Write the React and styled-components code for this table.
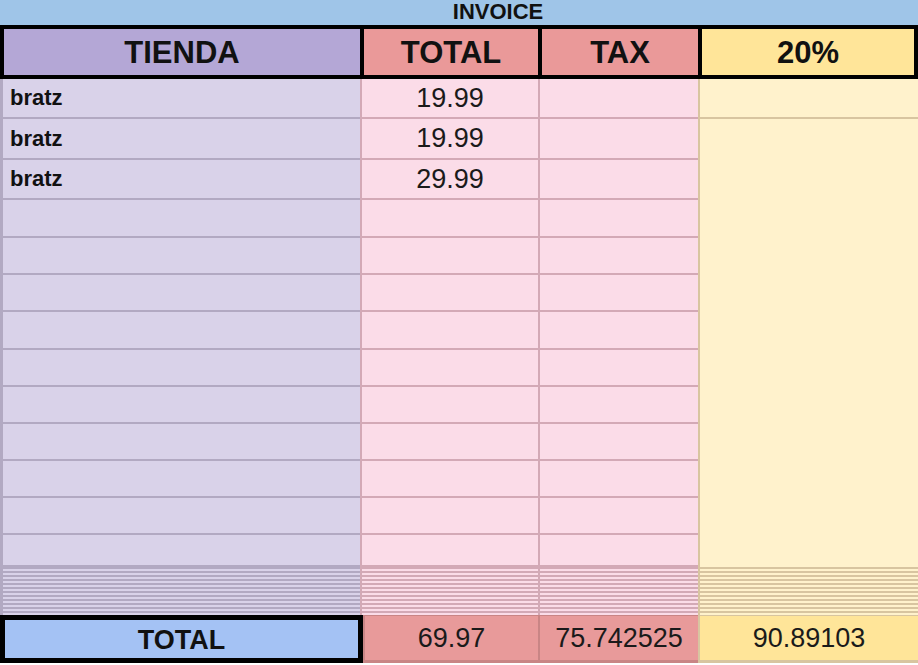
import styled, { createGlobalStyle } from "styled-components";

const GlobalStyle = createGlobalStyle`
  html, body {
    margin: 0;
    padding: 0;
    background: #fff;
  }
  body {
    font-family: "Liberation Sans", Arial, sans-serif;
    color: #111;
  }
`;

const palette = {
  store: { head: "#b4a7d6", cell: "#d9d2e9", line: "#b2a9c2" },
  total: { head: "#ea9999", cell: "#fbdce8", line: "#d3a9b6" },
  tax: { head: "#ea9999", cell: "#fbdce8", line: "#d3a9b6" },
  pct: { head: "#ffe599", cell: "#fff2cc", line: "#d8c5a0" },
};

const COLS = "360px 178px 160px 1fr";

const Sheet = styled.div`
  width: 918px;
  height: 665px;
  overflow: hidden;
  background: #fff;
`;

const TitleBar = styled.div`
  height: 25px;
  box-sizing: border-box;
  background: #9fc5e8;
  display: flex;
  align-items: flex-start;
  justify-content: center;
  padding: 1px 0 0 78px;
  font-size: 22px;
  font-weight: 700;
  line-height: 1;
`;

const HeaderRow = styled.div`
  display: grid;
  grid-template-columns: ${COLS};
  height: 54px;
  box-sizing: border-box;
  border-top: 4px solid #000;
  border-bottom: 4px solid #000;
`;

const HeadCell = styled.div`
  background: ${(p) => p.$bg};
  border-left: 4px solid #000;
  border-right: ${(p) => (p.$last ? "4px solid #000" : "none")};
  display: flex;
  align-items: center;
  justify-content: center;
  font-size: 31px;
  font-weight: 700;
  padding-top: 2px;
  box-sizing: border-box;
`;

const Body = styled.div`
  display: grid;
  grid-template-columns: ${COLS};
  grid-template-rows: 40px 41px 40px 38px 37px 37px 38px 37px 37px 37px 37px 37px 32px 48px;
`;

const Cell = styled.div`
  background: ${(p) => p.$tone.cell};
  border-left: ${(p) => (p.$first ? "3px" : "2px")} solid ${(p) => p.$tone.line};
  border-bottom: 2px solid ${(p) => p.$tone.line};
  box-sizing: border-box;
  display: flex;
  align-items: center;
  justify-content: ${(p) => (p.$center ? "center" : "flex-start")};
  padding-left: ${(p) => (p.$center ? "0" : "7px")};
  font-size: ${(p) => (p.$center ? "27px" : "22px")};
  font-weight: ${(p) => (p.$center ? 400 : 700)};
  color: ${(p) => (p.$center ? "#1a1a1a" : "#111")};
`;

const MergedCell = styled.div`
  grid-column: 4;
  grid-row: 2 / span 12;
  background: ${palette.pct.cell};
  border-left: 2px solid ${palette.pct.line};
`;

const Squashed = styled.div`
  border-left: ${(p) => (p.$first ? "3px" : "2px")} solid ${(p) => p.$tone.line};
  background: repeating-linear-gradient(
    to bottom,
    ${(p) => p.$tone.line} 0 2px,
    ${(p) => p.$tone.cell} 2px 4px
  );
`;

const FooterRow = styled.div`
  display: grid;
  grid-template-columns: 363px 175px 160px 1fr;
  height: 48px;
`;

const FootLabel = styled.div`
  background: #a4c2f4;
  border: 5px solid #000;
  box-sizing: border-box;
  display: flex;
  align-items: center;
  justify-content: center;
  font-size: 27px;
  font-weight: 700;
  padding-top: 2px;
`;

const FootCell = styled.div`
  background: ${(p) => p.$bg};
  border-left: 2px solid ${(p) => p.$line};
  border-top: 1px solid ${(p) => p.$line};
  border-bottom: 3px solid ${(p) => p.$line};
  box-sizing: border-box;
  display: flex;
  align-items: center;
  justify-content: center;
  font-size: 27px;
  color: #1a1a1a;
`;

const items = [
  { store: "bratz", total: "19.99" },
  { store: "bratz", total: "19.99" },
  { store: "bratz", total: "29.99" },
];

const EMPTY_ROWS = 10;

export default function App() {
  const rows = [
    ...items,
    ...Array.from({ length: EMPTY_ROWS }, () => ({ store: "", total: "" })),
  ];

  return (
    <Sheet>
      <GlobalStyle />
      <TitleBar>INVOICE</TitleBar>
      <HeaderRow>
        <HeadCell $bg={palette.store.head}>TIENDA</HeadCell>
        <HeadCell $bg={palette.total.head}>TOTAL</HeadCell>
        <HeadCell $bg={palette.tax.head}>TAX</HeadCell>
        <HeadCell $bg={palette.pct.head} $last>
          20%
        </HeadCell>
      </HeaderRow>
      <Body>
        {rows.map((row, i) => [
          <Cell key={`s${i}`} $tone={palette.store} $first>
            {row.store}
          </Cell>,
          <Cell key={`t${i}`} $tone={palette.total} $center>
            {row.total}
          </Cell>,
          <Cell key={`x${i}`} $tone={palette.tax} $center />,
          i === 0 ? <Cell key="p0" $tone={palette.pct} /> : null,
        ])}
        <MergedCell />
        <Squashed $tone={palette.store} $first />
        <Squashed $tone={palette.total} />
        <Squashed $tone={palette.tax} />
        <Squashed $tone={palette.pct} />
      </Body>
      <FooterRow>
        <FootLabel>TOTAL</FootLabel>
        <FootCell $bg="#e89a9a" $line="#c98585">69.97</FootCell>
        <FootCell $bg="#e89a9a" $line="#c98585">75.742525</FootCell>
        <FootCell $bg="#ffe599" $line="#d8c5a0">90.89103</FootCell>
      </FooterRow>
    </Sheet>
  );
}
